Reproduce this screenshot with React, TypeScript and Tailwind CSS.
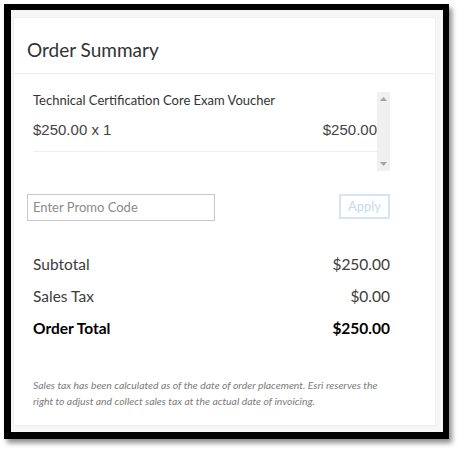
import React from "react";

export default function App() {
  const av = { fontFamily: "Lato, 'Noto Sans', sans-serif" };
  return (
    <div className="w-[462px] h-[453px] bg-white pt-[4px] pl-[4px]">
      <div className="w-[445px] h-[435px] border-t-[6px] border-l-[7px] border-r-[6px] border-b-[7px] border-black bg-[#f6f6f6] pt-[7px] pl-[2px] pr-[7px] pb-[6px] shadow-[3px_4px_5px_rgba(0,0,0,0.45)]">
        <div className="w-full h-full bg-white border border-[#efefef] flex flex-col" style={av}>
          <div className="px-[13px] pt-[20px] pb-[11px] border-b border-[#eeeeee]">
            <div className="text-[19px] leading-[24px] text-[#323232]">Order Summary</div>
          </div>
          <div className="px-[13px]">
            <div className="ml-[6px] mt-[18px] w-[357px] h-[79px] flex">
              <div className="flex-1 flex flex-col">
                <div className="text-[13px] leading-[16px] text-[#333]">Technical Certification Core Exam Voucher</div>
                <div className="mt-[12px] pb-[11px] border-b border-[#eeeeee] flex justify-between text-[15px] leading-[20px] text-[#444]" style={{ fontFamily: "'Liberation Sans', Arial, sans-serif" }}>
                  <span>$250.00 x 1</span>
                  <span>$250.00</span>
                </div>
              </div>
              <div className="w-[13px] h-full bg-[#f0f0f0] flex flex-col items-center justify-between py-[5px]">
                <svg width="7" height="4" viewBox="0 0 7 4"><path d="M0 4 L3.5 0 L7 4 Z" fill="#a3a3a3" /></svg>
                <svg width="7" height="4" viewBox="0 0 7 4"><path d="M0 0 L3.5 4 L7 0 Z" fill="#a3a3a3" /></svg>
              </div>
            </div>
            <div className="mt-[23px] flex items-start justify-between pr-[32px]">
              <div className="w-[188px] h-[27px] border border-[#c8c8c8] flex items-center pl-[5px] text-[13px] text-[#8a8a8a]">Enter Promo Code</div>
              <div className="w-[51px] h-[25px] border-2 border-[#d4e6f6] flex items-center justify-center text-[13px] text-[#c2daef]">Apply</div>
            </div>
            <div className="ml-[6px] mr-[32px] mt-[27px] flex flex-col text-[15.5px] leading-[32px]">
              <div className="flex justify-between text-[#3c3c3c]"><span>Subtotal</span><span>$250.00</span></div>
              <div className="flex justify-between text-[#3c3c3c]"><span>Sales Tax</span><span>$0.00</span></div>
              <div className="flex justify-between text-black font-bold"><span>Order Total</span><span>$250.00</span></div>
            </div>
            <div className="ml-[6px] w-[350px] mt-[33px] text-[10.4px] leading-[16px] italic text-[#7a7a7a]">
              Sales tax has been calculated as of the date of order placement. Esri reserves the right to adjust and collect sales tax at the actual date of invoicing.
            </div>
          </div>
        </div>
      </div>
    </div>
  );
}
